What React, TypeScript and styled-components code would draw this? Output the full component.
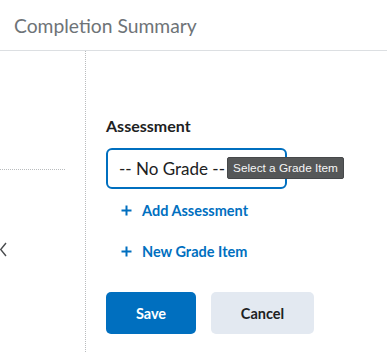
import React from "react";
import styled, { createGlobalStyle } from "styled-components";

const Global = createGlobalStyle`
  html, body { margin: 0; padding: 0; background: #fff; }
  body { font-family: Lato, "Open Sans", sans-serif; color: #202122; overflow: hidden; }
  * { box-sizing: border-box; }
`;

const Page = styled.div`
  width: 387px;
  height: 352px;
  display: flex;
  flex-direction: column;
`;

const Header = styled.header`
  height: 51px;
  flex: none;
  border-bottom: 1px solid #dcdfe2;
  padding: 14px 0 0 14px;
  font-size: 19.3px;
  line-height: 23px;
  color: #6e7377;
`;

const Main = styled.div`
  flex: 1;
  display: flex;
  min-height: 0;
`;

const Side = styled.div`
  width: 85px;
  flex: none;
  display: flex;
  flex-direction: column;
  padding-top: 118px;
`;

const DottedRule = styled.div`
  width: 65px;
  border-top: 1px dotted #b9bcbe;
`;

const Chevron = styled.svg`
  margin-top: 72px;
  display: block;
`;

const Content = styled.div`
  flex: 1;
  border-left: 1px dotted #b9bcbe;
  padding: 65px 0 0 20px;
  display: flex;
  flex-direction: column;
  align-items: flex-start;
`;

const Label = styled.div`
  font-size: 16px;
  font-weight: 700;
  line-height: 19px;
  margin-bottom: 13px;
`;

const SelectWrap = styled.div`
  position: relative;
`;

const Select = styled.div`
  width: 181px;
  height: 41px;
  border: 2px solid #006fbf;
  border-radius: 6px;
  padding-left: 11px;
  display: flex;
  align-items: center;
  font-size: 17px;
  color: #202122;
`;

const Tooltip = styled.div`
  position: absolute;
  left: 121px;
  top: 9px;
  width: 117px;
  height: 22px;
  background: #555758;
  border: 1px solid #46484a;
  border-radius: 2px;
  color: #f6f6f6;
  font-family: "Liberation Sans", Arial, sans-serif;
  font-size: 11.8px;
  line-height: 20px;
  text-align: center;
  white-space: nowrap;
`;

const LinkRow = styled.div<{ $mt: number }>`
  margin-top: ${(p) => p.$mt}px;
  margin-left: 15px;
  display: flex;
  align-items: center;
  gap: 10px;
  height: 20px;
  font-size: 14.5px;
  font-weight: 700;
  color: #006fbf;
`;

const Buttons = styled.div`
  margin-top: 31px;
  display: flex;
  gap: 15px;
`;

const Button = styled.button<{ $primary?: boolean; $w: number }>`
  width: ${(p) => p.$w}px;
  height: 42px;
  border: none;
  border-radius: 5px;
  font-family: Lato, sans-serif;
  font-size: 14.5px;
  font-weight: 700;
  background: ${(p) => (p.$primary ? "#006fbf" : "#e3e9f1")};
  color: ${(p) => (p.$primary ? "#ffffff" : "#202122")};
  padding: 0;
`;

const Plus = () => (
  <svg width="11" height="11" viewBox="0 0 11 11">
    <path d="M5.5 0.5v10M0.5 5.5h10" stroke="#006fbf" strokeWidth="2" />
  </svg>
);

export default function App() {
  return (
    <>
      <Global />
      <Page>
        <Header>Completion Summary</Header>
        <Main>
          <Side>
            <DottedRule />
            <Chevron width="7" height="15" viewBox="0 0 7 15">
              <path d="M6 1 L0.7 7.5 L6 14" fill="none" stroke="#494c4e" strokeWidth="1.4" />
            </Chevron>
          </Side>
          <Content>
            <Label>Assessment</Label>
            <SelectWrap>
              <Select>-- No Grade --</Select>
              <Tooltip>Select a Grade Item</Tooltip>
            </SelectWrap>
            <LinkRow $mt={11}>
              <Plus />
              Add Assessment
            </LinkRow>
            <LinkRow $mt={21}>
              <Plus />
              New Grade Item
            </LinkRow>
            <Buttons>
              <Button $primary $w={90}>Save</Button>
              <Button $w={103}>Cancel</Button>
            </Buttons>
          </Content>
        </Main>
      </Page>
    </>
  );
}
